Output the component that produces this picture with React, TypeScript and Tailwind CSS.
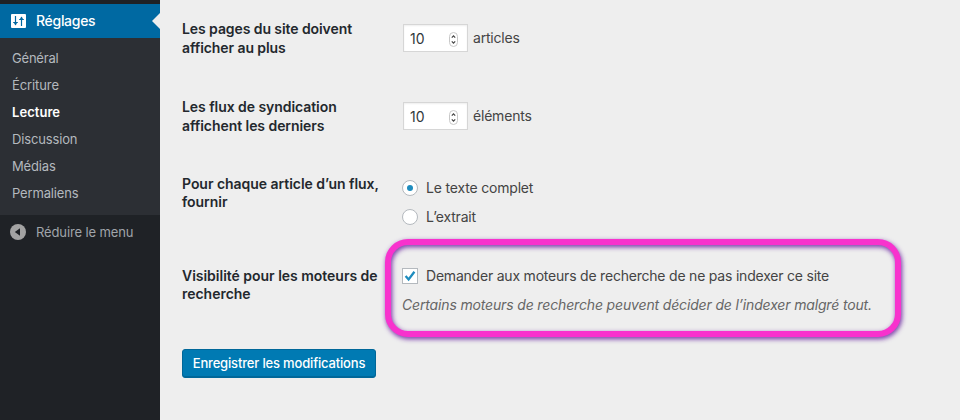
import React from "react";

const submenu = [
  { label: "Général", cls: "tracking-[-0.2px]" },
  { label: "Écriture", cls: "tracking-[-0.1px]" },
  { label: "Lecture", cls: "font-semibold text-white tracking-[0.05px]" },
  { label: "Discussion", cls: "tracking-[-0.15px]" },
  { label: "Médias", cls: "tracking-[-0.15px]" },
  { label: "Permaliens", cls: "tracking-[-0.15px]" },
];

function Sidebar() {
  return (
    <aside className="flex h-full w-[160px] shrink-0 flex-col bg-[#1f2226] pt-1">
      <div className="flex h-[34px] items-center bg-[#0069a2] pl-[11px] text-white">
        <svg width="15" height="14" viewBox="0 0 15 14">
          <rect width="15" height="14" rx="1" fill="#fff" />
          <g stroke="#0069a2" fill="none">
            <path d="M4.5 2v9M10.5 3v9" strokeWidth="1.2" />
            <path d="M2.2 8.5h4.6M8.2 5.5h4.6" strokeWidth="1.2" />
          </g>
          <path d="M2.7 8.5h3.6L4.5 11.4zM8.7 5.4h3.6L10.5 2.4z" fill="#0069a2" />
        </svg>
        <span className="mb-[2px] ml-[10px] text-[14px] font-medium tracking-[-0.3px]">Réglages</span>
        <svg className="ml-auto" width="8" height="16" viewBox="0 0 8 16">
          <path d="M8 0v16L0 8z" fill="#eee" />
        </svg>
      </div>
      <ul className="flex h-[177px] flex-col bg-[#2c2f34] pt-[7px] pl-3 text-[13px] leading-[27px] text-[#b4b9be]">
        {submenu.map((s) => (
          <li key={s.label} className={s.cls}>{s.label}</li>
        ))}
      </ul>
      <div className="flex h-[34px] items-center pl-[10px] text-[#a0a5aa]">
        <svg width="16" height="16" viewBox="0 0 16 16">
          <circle cx="8" cy="8" r="8" fill="#a3a3a3" />
          <path d="M10 4.2v7.6L4.8 8z" fill="#1f2226" />
        </svg>
        <span className="mt-[2px] ml-[10px] text-[13px] tracking-[-0.12px]">Réduire le menu</span>
      </div>
    </aside>
  );
}

function NumberField() {
  return (
    <div className="flex h-[28px] w-[65px] items-center justify-between border border-[#d6d6d6] bg-white pr-[9px] pl-[6px] text-[14px] text-[#32373c] shadow-[inset_0_1px_2px_rgba(0,0,0,0.07)]">
      <span>10</span>
      <svg className="mt-[3px]" width="9" height="15" viewBox="0 0 9 15" fill="none">
        <rect x="0.5" y="0.5" width="8" height="14" rx="4" stroke="#c8c8c8" fill="#fff" />
        <path d="M2.8 5.6 4.5 3.8l1.7 1.8M2.8 9.4l1.7 1.8 1.7-1.8" stroke="#444" strokeWidth="1.2" />
      </svg>
    </div>
  );
}

function Label({ lines, className }: { lines: [string, string]; className: string }) {
  return (
    <div className={"w-[220px] shrink-0 text-[14px] font-semibold text-[#23282d] " + className}>
      <div>{lines[0]}</div>
      <div>{lines[1]}</div>
    </div>
  );
}

export default function App() {
  return (
    <div className="flex h-[420px] w-[960px] overflow-hidden bg-[#eee] font-['Inter','Liberation_Sans',sans-serif] whitespace-nowrap">
      <Sidebar />
      <main className="flex flex-1 flex-col pt-[19px] pl-[22px] text-[14px] text-[#444]">
        <div className="flex h-[78px]">
          <Label className="leading-[19px] tracking-[-0.08px]" lines={["Les pages du site doivent", "afficher au plus"]} />
          <div className="flex h-[38px] items-center gap-[5px] pl-px">
            <NumberField />
            <span className="mb-[2px] tracking-[-0.2px]">articles</span>
          </div>
        </div>
        <div className="flex h-[78px]">
          <Label className="leading-[19px] tracking-[-0.06px]" lines={["Les flux de syndication", "affichent les derniers"]} />
          <div className="flex h-[38px] items-center gap-[5px] pl-px">
            <NumberField />
            <span className="mb-[2px] tracking-[-0.2px]">éléments</span>
          </div>
        </div>
        <div className="flex h-[92px]">
          <Label className="leading-[18px] tracking-[-0.04px]" lines={["Pour chaque article d’un flux,", "fournir"]} />
          <div className="flex flex-col">
            <div className="flex h-[26px] items-center gap-[8px]">
              <span className="flex size-4 items-center justify-center rounded-full border border-[#b4b9be] bg-white">
                <span className="size-[6px] rounded-full bg-[#1e8cbe]" />
              </span>
              <span className="mb-[2px] tracking-[-0.18px]">Le texte complet</span>
            </div>
            <div className="flex h-[32px] items-center gap-[8px]">
              <span className="size-4 rounded-full border border-[#b4b9be] bg-white" />
              <span className="mb-[2px] tracking-[-0.18px]">L’extrait</span>
            </div>
          </div>
        </div>
        <div className="relative flex h-[82px]">
          <Label className="leading-[18px] tracking-[-0.02px]" lines={["Visibilité pour les moteurs de", "recherche"]} />
          <div className="flex flex-col">
            <div className="flex h-[17px] items-center gap-[8px]">
              <span className="flex size-4 items-center justify-center border border-[#b4b9be] bg-white">
                <svg width="12" height="12" viewBox="0 0 12 12" fill="none">
                  <path d="M1.6 6 4.6 9.4 10.4 1.8" stroke="#1e8cbe" strokeWidth="2.3" />
                </svg>
              </span>
              <span className="tracking-[-0.21px]">Demander aux moteurs de recherche de ne pas indexer ce site</span>
            </div>
            <div className="mt-[12px] leading-[18px] tracking-[-0.155px] text-[#666] italic">Certains moteurs de recherche peuvent décider de l’indexer malgré tout.</div>
          </div>
          <div className="absolute -top-7 left-[203px] h-[98px] w-[516px] rounded-[23px] border-[6px] border-[#f832cd] drop-shadow-[1px_2px_2.5px_rgba(90,10,150,0.85)]" />
        </div>
        <button className="flex h-[29px] w-[194px] items-center justify-center rounded-[3px] border border-[#006799] bg-[#007ab3] text-[13px] font-medium tracking-[-0.17px] text-white shadow-[inset_0_-1px_0_#006799]">
          Enregistrer les modifications
        </button>
      </main>
    </div>
  );
}
